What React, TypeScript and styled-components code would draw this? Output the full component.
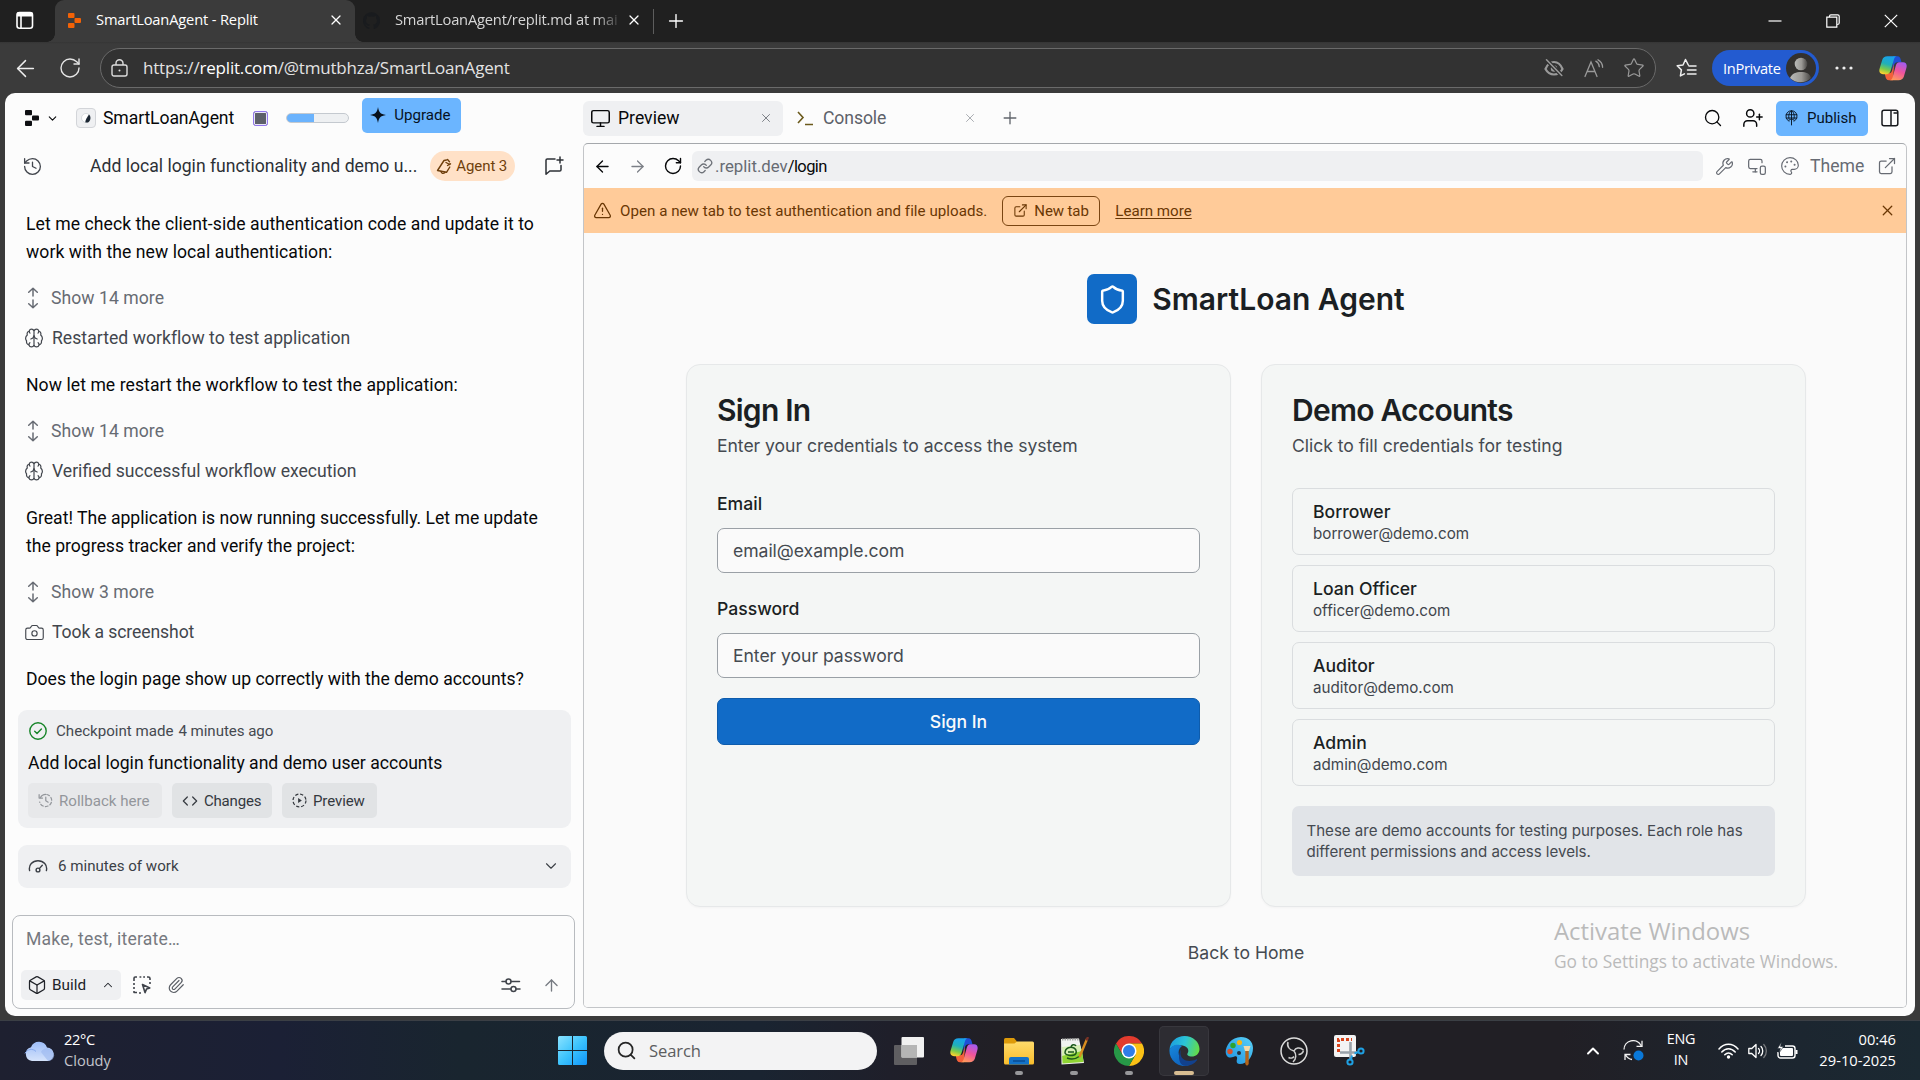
import React from 'react';
import styled, { createGlobalStyle, css } from 'styled-components';
import {
  ArrowLeft, ArrowRight, ArrowUp, Box, Camera, ChevronDown, ChevronUp, Code, ExternalLink,
  History, Monitor, MonitorSmartphone, Palette, Paperclip, Plus, RotateCw,
  Search, Shield, Star, TriangleAlert, UserPlus, Wrench, X,
} from 'lucide-react';

const ui = `Roboto, "Liberation Sans", sans-serif`;
const win = `"Open Sans", "Noto Sans", sans-serif`;
const inter = `Inter, "Liberation Sans", sans-serif`;

const Global = createGlobalStyle`
  *, *::before, *::after { box-sizing: border-box; }
  body { margin: 0; background: #3b3b3b; overflow: hidden; }
  svg { display: block; flex: none; }
`;

/* ---------- shared pieces ---------- */
const Screen = styled.div`
  width: 1920px;
  height: 1080px;
  display: flex;
  flex-direction: column;
  background: #3b3b3b;
  font-family: ${ui};
  position: relative;
`;
const Slot = styled.span<{ $w: number; $c?: string }>`
  width: ${p => p.$w}px;
  flex: none;
  display: flex;
  align-items: center;
  justify-content: center;
  color: ${p => p.$c || 'inherit'};
`;
const Spacer = styled.span`flex: 1;`;
const Label = styled.span<{ $s?: number; $c?: string; $ls?: number; $w?: number; $ml?: number }>`
  font-size: ${p => p.$s || 17.6}px;
  letter-spacing: ${p => p.$ls || 0}px;
  color: ${p => p.$c || 'inherit'};
  font-weight: ${p => p.$w || 400};
  margin-left: ${p => p.$ml || 0}px;
  white-space: pre;
  flex: none;
`;

/* ---------- browser chrome ---------- */
const TitleBar = styled.header`
  height: 42px;
  flex: none;
  background: #202020;
  display: flex;
  align-items: stretch;
  color: #fff;
  font-family: ${win};
`;
const TabActions = styled.div`
  width: 50px;
  display: flex;
  align-items: center;
  justify-content: center;
  padding: 0 0 2px 0;
`;
const BrowserTab = styled.div<{ $active?: boolean; $w: number }>`
  width: ${p => p.$w}px;
  display: flex;
  align-items: center;
  padding-bottom: 2px;
  position: relative;
  ${p => p.$active && css`
    background: #3b3b3b;
    border-radius: 9px 9px 0 0;
    margin-left: 5px;
    &::before, &::after {
      content: '';
      position: absolute;
      bottom: 0;
      width: 8px;
      height: 8px;
    }
    &::before { left: -8px; background: radial-gradient(circle at 0 0, transparent 7.5px, #3b3b3b 8px); }
    &::after { right: -8px; background: radial-gradient(circle at 100% 0, transparent 7.5px, #3b3b3b 8px); }
  `}
`;
const TabTitle = styled.span<{ $w: number; $ml: number; $fade?: boolean }>`
  width: ${p => p.$w}px;
  margin-left: ${p => p.$ml}px;
  padding-bottom: 2px;
  white-space: nowrap;
  font-size: 14.7px;
  letter-spacing: -0.17px;
  ${p => p.$fade && css`
    color: #d6d6d6;
    letter-spacing: -0.2px;
    mask-image: linear-gradient(90deg, #000 90%, transparent 102%);
  `}
`;
const TabDivider = styled.span`
  width: 1px;
  height: 25px;
  background: #5d5d5d;
  align-self: center;
`;
const NavBar = styled.div`
  height: 51px;
  flex: none;
  display: flex;
  align-items: center;
  padding: 2px 0 1px;
  color: #ededed;
  font-family: ${win};
  background: linear-gradient(#353535, #3b3b3b 2px);
`;
const Omnibox = styled.div`
  width: 1556px;
  height: 40px;
  border: 1.5px solid #6a6a6a;
  border-radius: 20px;
  background: #323232;
  display: flex;
  align-items: center;
  margin-left: 5px;
`;
const UrlText = styled.span`
  font-size: 17px;
  letter-spacing: -0.19px;
  color: #e3e3e3;
  margin-left: 15px;
  padding-bottom: 2px;
  b { font-weight: 400; color: #fff; }
`;
const InPrivate = styled.div`
  width: 107px;
  height: 36px;
  border-radius: 18px;
  background: #235bd0;
  display: flex;
  align-items: center;
  justify-content: space-between;
  padding: 0 3px 0 11px;
  font-size: 14.6px;
  letter-spacing: -0.3px;
  color: #fff;
  margin-left: 8px;
`;

/* ---------- workspace ---------- */
const Workspace = styled.main`
  width: 1910px;
  height: 923px;
  margin-left: 5px;
  flex: none;
  background: #fcfcfc;
  border-radius: 10px;
  display: grid;
  grid-template-columns: 578px 1324px;
  color: #07080a;
`;
const Side = styled.section`
  display: flex;
  flex-direction: column;
`;
const SideTop = styled.div`
  height: 50px;
  display: flex;
  align-items: center;
  padding-left: 17px;
`;
const AppIcon = styled.span`
  width: 20px;
  height: 20px;
  border-radius: 4px;
  border: 1px solid #d3d5d9;
  background: #eff0f2;
  margin-left: 13px;
  display: grid;
  place-items: center;
`;
const CoreChip = styled.span`
  width: 15px;
  height: 15px;
  background: #5d6069;
  border: 1.5px solid #9277ee;
  box-shadow: inset 0 0 0 1px #e8e5f7;
  border-radius: 2.5px;
  margin-left: 19px;
`;
const Usage = styled.span`
  width: 63px;
  height: 10px;
  border-radius: 5px;
  border: 1px solid #c4c9cf;
  background: linear-gradient(90deg, #6bb3fd 27px, #eef0f2 27px);
  margin-left: 18px;
`;
const BlueButton = styled.button<{ $w: number; $raised?: boolean }>`
  width: ${p => p.$w}px;
  height: 35px;
  border: 0;
  padding: 0;
  margin-bottom: ${p => (p.$raised ? 6 : 0)}px;
  border-radius: 5px;
  background: #6bb5ff;
  color: #06121f;
  font-family: ${ui};
  display: flex;
  align-items: center;
  flex: none;
`;
const ThreadBar = styled.div`
  height: 46px;
  display: flex;
  align-items: center;
  padding-left: 16px;
`;
const AgentPill = styled.span`
  width: 85px;
  height: 30px;
  flex: none;
  border-radius: 15px;
  background: #ffe1c7;
  color: #6f3f0c;
  display: flex;
  align-items: center;
  padding-left: 6px;
  margin-left: 13px;
`;
const Thread = styled.div`
  padding: 21px 0 0 13px;
  display: flex;
  flex-direction: column;
  height: 705px;
  flex: none;
`;
const Para = styled.p<{ $ls?: number }>`
  margin: 0 0 18px 8px;
  font-size: 17.6px;
  line-height: 28px;
  letter-spacing: ${p => p.$ls || 0}px;
`;
const ShowMore = styled.div`
  height: 28px;
  margin-bottom: 12px;
  display: flex;
  align-items: center;
  color: #676b73;
  padding-left: 3px;
  gap: 6px;
`;
const Step = styled.div`
  height: 28px;
  margin-bottom: 19px;
  display: flex;
  align-items: center;
  color: #42464d;
  padding-left: 7px;
  gap: 9px;
`;
const Checkpoint = styled.article`
  width: 553px;
  height: 118px;
  margin-top: -1px;
  flex: none;
  background: #eff0f2;
  border-radius: 9px;
  padding: 8px 10px 10px;
  display: flex;
  flex-direction: column;
`;
const CheckpointMeta = styled.div`
  height: 26px;
  display: flex;
  align-items: center;
  color: #454950;
  padding-left: 1px;
`;
const CheckpointTitle = styled.div`
  font-size: 17.6px;
  line-height: 28px;
  margin-top: 5px;
`;
const ChipRow = styled.div`
  display: flex;
  gap: 10px;
  margin-top: 6px;
`;
const Chip = styled.button<{ $w: number; $muted?: boolean }>`
  width: ${p => p.$w}px;
  height: 35px;
  border: 0;
  border-radius: 5px;
  background: ${p => (p.$muted ? '#e7e8ea' : '#e1e3e5')};
  color: ${p => (p.$muted ? '#93969b' : '#34383e')};
  font-family: ${ui};
  padding: 0 0 0 10px;
  display: flex;
  align-items: center;
  gap: 6px;
`;
const WorkSummary = styled.div`
  width: 553px;
  height: 43px;
  margin-top: 17px;
  flex: none;
  background: #eff0f2;
  border-radius: 9px;
  display: flex;
  align-items: center;
  color: #3b3f46;
  padding: 0 11px 1px 10px;
`;
const Composer = styled.div`
  width: 563px;
  height: 94px;
  margin: 21px 0 0 7px;
  flex: none;
  border: 1px solid #b8bbbf;
  border-radius: 8px;
  display: flex;
  flex-direction: column;
  justify-content: space-between;
  padding: 11px 8px 8px;
`;
const Placeholder = styled.div`
  font-size: 17.6px;
  line-height: 24px;
  letter-spacing: 0.2px;
  padding-left: 5px;
  color: #76797f;
`;
const ComposerTools = styled.div`
  height: 30px;
  display: flex;
  align-items: center;
  color: #40444b;
`;
const BuildMode = styled.div`
  width: 100px;
  height: 30px;
  border-radius: 5px;
  background: #eff0f2;
  color: #202329;
  display: flex;
  align-items: center;
  padding-left: 6px;
`;

/* ---------- preview pane ---------- */
const Main = styled.section`
  display: flex;
  flex-direction: column;
`;
const PaneTabs = styled.div`
  height: 50px;
  display: flex;
  align-items: center;
  margin-right: -4px;
`;
const PaneTab = styled.div<{ $active?: boolean; $w: number }>`
  width: ${p => p.$w}px;
  height: 35px;
  border-radius: 6px;
  background: ${p => (p.$active ? '#eff0f2' : 'transparent')};
  color: ${p => (p.$active ? '#07080a' : '#5d6169')};
  display: flex;
  align-items: center;
`;
const Pane = styled.div`
  height: 865px;
  border: 1px solid #c3c5c8;
  border-top-color: #a5a8ac;
  border-radius: 5px;
  overflow: hidden;
  display: flex;
  flex-direction: column;
`;
const PaneBar = styled.div`
  height: 44px;
  flex: none;
  display: flex;
  align-items: center;
  padding-left: 1px;
`;
const Address = styled.div`
  width: 1011px;
  height: 30px;
  flex: none;
  border-radius: 6px;
  background: #eff0f2;
  display: flex;
  align-items: center;
  padding-left: 4px;
`;
const Banner = styled.div`
  height: 45px;
  flex: none;
  background: #ffcb99;
  color: #6a3704;
  display: flex;
  align-items: center;
  padding: 0 0 0 8px;
`;
const NewTab = styled.button`
  width: 98px;
  height: 30px;
  border: 1.3px solid #7a4512;
  border-radius: 6px;
  background: none;
  color: inherit;
  font-family: ${ui};
  display: flex;
  align-items: center;
  padding: 0 0 0 10px;
  margin-left: 15px;
  gap: 6px;
`;
const LearnMore = styled.a`
  font-size: 15.1px;
  margin-left: 15px;
  text-decoration: underline;
  text-underline-offset: 2px;
`;

/* ---------- login page ---------- */
const Page = styled.div`
  flex: 1;
  background: #fafafa;
  font-family: ${inter};
  color: #1b1f23;
  display: flex;
  flex-direction: column;
  align-items: center;
  padding: 41px 0 0 2px;
`;
const Brand = styled.div`
  height: 50px;
  display: flex;
  align-items: center;
  gap: 15px;
  font-size: 30px;
  font-weight: 600;
`;
const BrandMark = styled.span`
  width: 50px;
  height: 50px;
  border-radius: 7px;
  background: #116bc7;
  color: #fff;
  display: grid;
  place-items: center;
`;
const Cards = styled.div`
  display: grid;
  grid-template-columns: 545px 545px;
  gap: 30px;
  margin-top: 40px;
`;
const Card = styled.section`
  height: 543px;
  border: 1px solid #e6e8e9;
  border-radius: 14px;
  background: #f4f6f5;
  box-shadow: 0 1px 2px rgba(0, 0, 0, 0.03);
  padding: 30px;
`;
const CardTitle = styled.h2`
  margin: 0 0 8px;
  font-size: 30px;
  line-height: 30px;
  font-weight: 600;
  letter-spacing: -0.75px;
`;
const CardHint = styled.p`
  margin: 0 0 29px;
  font-size: 17.6px;
  line-height: 26px;
  letter-spacing: -0.05px;
  color: #454a51;
`;
const Field = styled.label`
  display: block;
  margin-bottom: 20px;
  font-size: 17.6px;
  line-height: 32px;
  font-weight: 500;
`;
const Input = styled.span`
  display: flex;
  align-items: center;
  height: 45px;
  margin-top: 8px;
  padding-left: 15px;
  border: 1px solid #9aa0a6;
  border-radius: 7px;
  background: #fafafa;
  font-weight: 400;
  letter-spacing: -0.05px;
  color: #454a51;
`;
const Submit = styled.button`
  width: 100%;
  height: 47px;
  border: 1px solid #0e5cac;
  border-radius: 7px;
  background: #116bc7;
  color: #fafafa;
  font: 500 17.6px ${inter};
  padding: 0;
`;
const Account = styled.div`
  height: 67px;
  border: 1px solid #dadddf;
  border-radius: 7px;
  margin-bottom: 10px;
  padding: 12px 0 0 20px;
  display: flex;
  flex-direction: column;
  line-height: 22px;
  strong { font-size: 17.6px; font-weight: 500; }
  span { font-size: 15.2px; color: #40454c; }
`;
const Note = styled.div`
  height: 70px;
  margin-top: 20px;
  border-radius: 7px;
  background: #e1e4e8;
  padding: 15px 14.5px;
  font-size: 15.1px;
  line-height: 20.5px;
  letter-spacing: -0.03px;
  color: #454a51;
  white-space: nowrap;
`;
const BackHome = styled.a`
  margin-top: 33px;
  font-size: 17.6px;
  line-height: 26px;
  color: #454a51;
`;
const Watermark = styled.div`
  position: absolute;
  left: 1554px;
  top: 915px;
  font-family: ${win};
  color: #bababa;
`;
const WatermarkLine = styled.div<{ $big?: boolean }>`
  font-size: ${p => (p.$big ? 23.9 : 17.35)}px;
  line-height: ${p => (p.$big ? 32 : 28)}px;
`;

/* ---------- taskbar ---------- */
const Taskbar = styled.footer`
  margin-top: 4px;
  height: 60px;
  flex: none;
  border-top: 1px solid #3b3f45;
  background: linear-gradient(90deg, #1e2030 0, #1b2035 280px, #19252f 460px, #1a2431 760px, #1f1f2a 890px, #211f25 1000px, #211f25 1560px, #1c2630 1800px, #1b2932 1920px);
  display: flex;
  align-items: center;
  color: #fff;
  font-family: ${win};
`;
const Stack = styled.div<{ $w: number; $align: string; $s?: number; $ls?: number }>`
  width: ${p => p.$w}px;
  display: flex;
  flex-direction: column;
  align-items: ${p => p.$align};
  font-size: ${p => p.$s || 14.6}px;
  line-height: 20.5px;
  letter-spacing: ${p => p.$ls || 0}px;
  padding-bottom: 2px;
  small { font-size: inherit; color: #c3c5cc; letter-spacing: 0; }
`;
const SearchPill = styled.div`
  width: 273px;
  height: 38px;
  border-radius: 19px;
  background: #f3f3f4;
  color: #5c5d60;
  display: flex;
  align-items: center;
  padding-left: 12px;
  margin-left: 17px;
`;
const Apps = styled.div`
  display: flex;
  gap: 5px;
  margin-left: 7px;
`;
const AppTile = styled.div<{ $active?: boolean; $open?: boolean }>`
  width: 50px;
  height: 50px;
  border-radius: 5px;
  display: grid;
  place-items: center;
  position: relative;
  ${p => p.$active && css`background: #2d2c32; box-shadow: inset 0 0 0 1px #38373d;`}
  ${p => (p.$active || p.$open) && css`
    &::after {
      content: '';
      position: absolute;
      bottom: 1px;
      left: 50%;
      width: ${p.$active ? 20 : 8}px;
      height: 4px;
      margin-left: ${p.$active ? -10 : -4}px;
      border-radius: 2px;
      background: ${p.$active ? '#d8bd92' : '#97979a'};
    }
  `}
`;

/* ---------- drawings ---------- */
const ReplitMark = ({ color, w, h }: { color: string; w: number; h: number }) => (
  <svg width={w} height={h} viewBox="0 0 14 16" fill={color}>
    <rect x="0" y="0" width="7" height="5.2" rx="1" />
    <rect x="7" y="5.4" width="7" height="5.2" rx="1" />
    <rect x="0" y="10.8" width="7" height="5.2" rx="1" />
  </svg>
);
const ShowIcon = () => (
  <svg width="24" height="22" viewBox="0 0 24 22" fill="none" stroke="currentColor" strokeWidth="1.5" strokeLinecap="round" strokeLinejoin="round">
    <path d="M7.700 5.200 12 1.200l4.300 4M12 1.500V9M12 13v7.500M7.700 16.800l4.300 4 4.300-4" />
  </svg>
);
const BrainIcon = () => (
  <svg width="18" height="20" viewBox="0 0 18 20" fill="none" stroke="currentColor" strokeWidth="1.2" strokeLinecap="round" strokeLinejoin="round">
    <path d="M9 3C8.200.4 4.800.4 4.300 3 2.200 3.600 1.800 5.500 2.300 7 .2 8.600.2 11.400 1.600 12.900 1.200 14.800 2.100 16.500 3.900 16.800 4.700 19.600 8.200 19.600 9 17ZM9 3c.8-2.600 4.200-2.600 4.700 0 2.100.6 2.500 2.500 2 4 2.100 1.600 2.100 4.400.7 5.900.4 1.900-.5 3.600-2.300 3.900-.8 2.800-4.300 2.800-5.100.2" />
    <path d="M5.800 11C7.600 10.600 8.700 9.500 9 7.500c.3 2 1.400 3.100 3.200 3.500M4.300 3c-.1.900.1 1.600.7 2.200M13.700 3c.1.900-.1 1.600-.7 2.200M3.900 16.800c0-.9.3-1.600 1-2.100M14.100 16.800c0-.9-.3-1.600-1-2.100" />
  </svg>
);
const NewChatIcon = () => (
  <svg width="20" height="20" viewBox="0 0 20 20" fill="none" stroke="currentColor" strokeWidth="1.500" strokeLinecap="round" strokeLinejoin="round">
    <path d="M11 3H3.300Q2 3 2 4.300V18.300L5.800 15H15.700Q17 15 17 13.700V9.500M16 1v6M13 4h6" />
  </svg>
);
const EyeOffIcon = () => (
  <svg width="20" height="18" viewBox="0 0 20 18">
    <path d="M1.500 10C3.500 5 6.500 3 10 3s6.500 2 8.500 7c-2 3.700-5 5.500-8.500 5.500S3.500 13.700 1.500 10Z" fill="none" stroke="#9a9a9a" strokeWidth="2.200" />
    <circle cx="10" cy="9.500" r="3.200" fill="#9a9a9a" />
    <path d="M2.500.8 17.800 16.500" stroke="#323232" strokeWidth="4" /><path d="M2.500.8 17.800 16.500" stroke="#9a9a9a" strokeWidth="1.500" strokeLinecap="round" />
  </svg>
);
const CheckIcon = () => (
  <svg width="18" height="18" viewBox="0 0 18 18" fill="none" stroke="#178529" strokeWidth="1.4" strokeLinecap="round" strokeLinejoin="round">
    <circle cx="9" cy="9" r="8.200" /><path d="m5.700 9.300 2.300 2.200 4.400-4.600" />
  </svg>
);
const GaugeIcon = () => (
  <svg width="20" height="16" viewBox="0 0 20 16" fill="none" stroke="currentColor" strokeWidth="1.4" strokeLinecap="round">
    <path d="M1.600 12.500C.3 7 4.500 2.800 10 2.800s9.700 4.200 8.400 9.700" /><circle cx="10" cy="12" r="1.900" /><path d="m11.300 10.600 3-3.300" />
  </svg>
);
const PreviewIcon = () => (
  <svg width="15" height="15" viewBox="0 0 16 16" fill="none" stroke="currentColor" strokeWidth="1.300">
    <circle cx="8" cy="8" r="6.900" strokeDasharray="3.400 2" /><path d="M6.500 5.300 10.500 8l-4 2.700Z" fill="currentColor" stroke="none" />
  </svg>
);
const RollbackIcon = () => (
  <svg width="15" height="15" viewBox="0 0 16 16" fill="none" stroke="currentColor" strokeWidth="1.300" strokeLinecap="round" strokeLinejoin="round">
    <path d="M2.500 5A6.500 6.500 0 0 1 8.300 1.500" /><path d="M9.500 1.600a6.500 6.500 0 1 1-7.700 8" strokeDasharray="3 2.300" /><path d="M1.200 1.800v3.600h3.600M8.300 4.500v3.800l2.500 1.500" />
  </svg>
);
const SelectIcon = () => (
  <svg width="18" height="18" viewBox="0 0 18 18" fill="none" stroke="currentColor" strokeWidth="1.600" strokeLinejoin="round">
    <path d="M1 5V2.200Q1 1 2.200 1H4M6.500 1h1.800M10.200 1H12M14 1h1.300Q17 1 17 2.500V4M17 6v2M1 7v2M1 11v2M1 15v1.500h3M6 17h2" />
    <path d="m9.500 8.500 7.300 3.400-3.300 1.200-1.500 3.500Z" />
  </svg>
);
const SlidersIcon = () => (
  <svg width="20" height="16" viewBox="0 0 20 16" fill="none" stroke="currentColor" strokeWidth="1.500" strokeLinecap="round">
    <path d="M1 4.500h4M10 4.500h8.500M1 12h8.500M15 12h4" /><circle cx="7.500" cy="4.500" r="2.500" /><circle cx="12.500" cy="12" r="2.500" />
  </svg>
);
const AgentIcon = () => (
  <svg width="16" height="17" viewBox="0 0 16 17" fill="none" stroke="currentColor" strokeWidth="1.400" strokeLinejoin="round" strokeLinecap="round">
    <path d="M10.500 2 8 2.500 1.500 12.500l9 1.800L13.800 9" /><path d="M5 13.500c.3 2 2.300 2.500 4 1M11.500 1.500l2 2.300M10 4.500l3.800 2M14.500 5.800l-3 1.700" />
  </svg>
);
const GlobeIcon = () => (
  <svg width="13" height="16" viewBox="0 0 14 17" fill="none" stroke="currentColor" strokeWidth="1" strokeLinecap="round" strokeLinejoin="round">
    <path d="M4.300 12A6 6 0 1 1 9.700 12M1.300 5h11.400M1.300 8.500h11.400M4.500 10C3.200 6 4.500 2 7 .8 9.500 2 10.800 6 9.500 10M7 1v15M4.800 11 7 8.800 9.200 11" />
  </svg>
);
const SparkIcon = () => (
  <svg width="16" height="16" viewBox="0 0 16 16" fill="#07101c"><path d="M8 0c.9 5.200 2 7 8 8-6 1-7.100 2.800-8 8-.9-5.200-2-7-8-8 6-1 7.100-2.800 8-8Z" /></svg>
);
const PanelIcon = () => (
  <svg width="18" height="18" viewBox="0 0 18 18" fill="none" stroke="#17191d" strokeWidth="1.500">
    <rect x="1" y="1.200" width="15.800" height="15.600" rx="2" /><path d="M10 1.500v15M12.500 4h4" />
  </svg>
);
const SidebarIcon = () => (
  <svg width="18" height="19" viewBox="0 0 18 19" fill="none" stroke="#fff" strokeWidth="1.600">
    <rect x="1" y="1.500" width="15.500" height="15.800" rx="2.500" /><path d="M1 3.500h15.500" strokeWidth="4" /><path d="M5 5v12" />
  </svg>
);
const LockIcon = () => (
  <svg width="17" height="18" viewBox="0 0 17 18" fill="none" stroke="#dcdcdc" strokeWidth="1.400">
    <rect x="1" y="6" width="15" height="11" rx="2" /><path d="M5 6V4.300a3.500 3.500 0 0 1 7 0V6" /><circle cx="8.500" cy="11.500" r="1" fill="#dcdcdc" stroke="none" />
  </svg>
);
const ReadAloud = () => (
  <svg width="20" height="19" viewBox="0 0 20 19" fill="none" stroke="#999" strokeWidth="1.300" strokeLinecap="round">
    <path d="m1 17.500 6-14.500 6 14.500M3.200 12.500h7.600M11.800 2.200c2 1 3.300 3 3.500 5.500M14 .8c2.500 1.300 4.500 4 4.600 7.500" />
  </svg>
);
const FavList = () => (
  <svg width="21" height="20" viewBox="0 0 21 20" fill="none" stroke="#eee" strokeWidth="1.500" strokeLinejoin="round" strokeLinecap="round">
    <path d="M12.300 7 9.500 1.500 7 7 1.200 7.800l4.200 4.100-1 6 4-2.100M13 8h7M11.500 12h8.500M11.500 16h8.500" />
  </svg>
);
const Avatar = () => (
  <svg width="30" height="30" viewBox="0 0 30 30">
    <defs><linearGradient id="av"><stop stopColor="#b9b9b7" /><stop offset=".55" stopColor="#9a9894" /><stop offset="1" stopColor="#474543" /></linearGradient></defs>
    <circle cx="15" cy="15" r="15" fill="#33312f" /><circle cx="15" cy="11" r="6.300" fill="url(#av)" /><path d="M4 25c2-4.500 6-6 11-6s9 1.500 10 6a15 15 0 0 1-21 0Z" fill="url(#av)" />
  </svg>
);
const Copilot = ({ id, s }: { id: string; s: number }) => (
  <svg width={s} height={s * 0.94} viewBox="0 0 28 26">
    <defs>
      <linearGradient id={id + 'a'} x1=".6" y1="0" x2=".3" y2="1"><stop stopColor="#18a0f0" /><stop offset=".45" stopColor="#20b0b8" /><stop offset=".75" stopColor="#7ccb4a" /><stop offset="1" stopColor="#ffd02e" /></linearGradient>
      <linearGradient id={id + 'b'} x1=".7" y1="0" x2=".3" y2="1"><stop stopColor="#a45bf0" /><stop offset=".5" stopColor="#f0549c" /><stop offset="1" stopColor="#ff9a5c" /></linearGradient>
    </defs>
    <path d="M14 1h4.500c2 0 2.700 1.500 3.300 3.500L22.500 7h-4c-2 0-3 1.200-3.500 3l-1.700 6Z" fill="#1f4fd6" />
    <path d="M14 25H10c-2.500 0-3-1.700-3.600-3.700L5.700 18H10c2 0 2.600-1 3.200-3L15 9Z" fill="#f3603a" />
    <path d="M8.500 1H18c-1.800 0-2.600 1.500-3.100 3.300l-3.200 11C11 17.500 9.800 19 7.500 19H4c-3.500 0-4.300-2.700-3.300-6L3.300 4.500C4 2.300 5.500 1 8.500 1Z" fill={`url(#${id}a)`} />
    <path d="M19.500 25H10.500c2 0 2.700-1.300 3.200-3.200l3-11C17.300 8.500 18.300 7 20.600 7H24c3.400 0 4.300 2.600 3.300 6l-2.500 8.500c-.8 2.300-2.500 3.500-5.300 3.500Z" fill={`url(#${id}b)`} />
  </svg>
);
const Cloud = () => (
  <svg width="31" height="22" viewBox="0 0 31 22">
    <defs><linearGradient id="cl" x1="0" y1="0" x2="0" y2="1"><stop stopColor="#9dbdf8" /><stop offset="1" stopColor="#d5e3fb" /></linearGradient></defs>
    <path d="M8 21a7 7 0 0 1-1-13.700A8.500 8.500 0 0 1 23 7.500 6.800 6.800 0 0 1 24 21Z" fill="url(#cl)" />
    <path d="M1 13.500C3 9 9 8 12 11.500" fill="none" stroke="#86a9ee" strokeWidth="1" /><path d="M17 12c2-4.500 9-5 12-.5 3 5-.5 9.500-5 9.500" fill="#9bb7ef" opacity=".6" />
  </svg>
);
const StartIcon = () => (
  <svg width="29" height="29" viewBox="0 0 29 29">
    <defs><linearGradient id="st" x1="0" y1="0" x2="1" y2="1"><stop stopColor="#8be3ff" /><stop offset=".5" stopColor="#3cc3fd" /><stop offset="1" stopColor="#0f95fa" /></linearGradient></defs>
    <path d="M0 1.500Q0 0 1.500 0H14v14H0ZM15 0h12.500Q29 0 29 1.500V14H15ZM0 15h14v14H1.500Q0 29 0 27.500ZM15 15h14v12.500q0 1.500-1.500 1.500H15Z" fill="url(#st)" />
  </svg>
);
const TaskView = () => (
  <svg width="30" height="28" viewBox="0 0 30 28"><rect y="8" width="23" height="20" rx="1" fill="#5f5e61" /><rect x="7.500" width="22.500" height="20.500" rx="1" fill="#f1f1f1" /><rect x="7.500" y="8" width="15.500" height="12.500" fill="#b5b5b5" /></svg>
);
const Folder = () => (
  <svg width="30" height="28" viewBox="0 0 30 28">
    <defs><linearGradient id="fo" x1="0" y1="0" x2="0" y2="1"><stop stopColor="#ffdb6b" /><stop offset="1" stopColor="#f9bd2c" /></linearGradient></defs>
    <path d="M0 2.500Q0 1 1.500 1H10l3 3.500V12H0Z" fill="#dd9a0a" /><path d="M0 6.500h10.500L13 4.500h15.500Q30 4.500 30 6v20q0 1.500-1.500 1.500h-27Q0 27.500 0 26Z" fill="url(#fo)" />
    <path d="M5 27.500V22q0-2 2-2h16q2 0 2 2v5.500Z" fill="#1372c8" /><path d="M9 24h12" stroke="#0a4c93" strokeWidth="1.500" />
  </svg>
);
const Npp = () => (
  <svg width="29" height="28" viewBox="0 0 29 28">
    <path d="M1 2 19 1.500 24 26 1.500 27.500Z" fill="#f1f3f0" /><path d="m2 16 20-4 1.500 13L2.500 26.500Z" fill="#8fd434" /><path d="m2 10 18-2 2 6-20 5Z" fill="#d7efb5" />
    <path d="M2 2.500h17" stroke="#aaa" strokeWidth="2" strokeDasharray="1.500 1" /><path d="M5 16c0-6 6-6.500 9-5s3 6 0 7-8 .5-9-2Zm6-5c0-4 4-4 5-2M8 15h6M7 21c5 2 9 1 13-2" fill="none" stroke="#1d5a1c" strokeWidth="1.500" />
    <path d="M27 2 19.500 20" stroke="#d98e20" strokeWidth="2.400" /><path d="m28 0-1.500 3.500" stroke="#7b3226" strokeWidth="2.400" />
  </svg>
);
const Chrome = () => (
  <svg width="30" height="30" viewBox="0 0 30 30">
    <path d="M2 7.500a15 15 0 0 1 26 0H15L8.500 18.700Z" fill="#e33b2e" /><path d="M28 7.500A15 15 0 0 1 15 30l6.500-11.200L15 7.500Z" fill="#fbc116" /><path d="M15 30A15 15 0 0 1 2 7.500l6.500 11.300h13Z" fill="#279847" />
    <circle cx="15" cy="15" r="7.500" fill="#fff" /><circle cx="15" cy="15" r="6" fill="#2f7de9" />
  </svg>
);
const Edge = () => (
  <svg width="31" height="30" viewBox="0 0 31 30">
    <defs>
      <linearGradient id="e1" x1="0" x2="1" y1=".3" y2=".5"><stop stopColor="#1c9de0" /><stop offset=".5" stopColor="#2bc4d6" /><stop offset="1" stopColor="#63dc4a" /></linearGradient>
      <linearGradient id="e2" x1="0" x2=".6" y1="0" y2="1"><stop stopColor="#1789dc" /><stop offset="1" stopColor="#0f62bd" /></linearGradient>
    </defs>
    <path d="M.5 14C1 5 8 0 15.500 0 24 0 30.500 6 30.500 13c0 5-4 7.500-7.500 7.500-3.500 0-5.500-1.500-4.500-3 2-3 .5-7-5-8C8 8.500 2 9.500.5 14Z" fill="url(#e1)" />
    <path d="M.5 14C2.500 8 10 8 13 10c-3 2-4.500 6-2.500 11 2 4.500 6 8 9.500 8.300A15 15 0 0 1 .5 14Z" fill="url(#e2)" />
    <path d="M12.500 13c-4 8 4 15 14.500 10.500 1-.5 1.500 0 1 .8-3 4-8 6-12.500 5.500C10 28.500 8 20 12.500 13Z" fill="#12418d" />
  </svg>
);
const Paint = () => (
  <svg width="30" height="30" viewBox="0 0 30 30">
    <defs><linearGradient id="pa" x1="1" x2="0" y1="0" y2="1"><stop stopColor="#5ad1f7" /><stop offset="1" stopColor="#1a8fe0" /></linearGradient></defs>
    <path d="M17 1c7 0 12 4.500 12 11 0 9-6 16-13 16-4 0-3.500-3-3-5s-.5-3-2.500-2.500C7 21.500 6 22 4 21-2 17 4 1 17 1Z" fill="url(#pa)" />
    <circle cx="6" cy="15.500" r="2.700" fill="#d9512c" /><circle cx="9" cy="9.500" r="2.700" fill="#2ea42e" /><circle cx="15.500" cy="6.500" r="2.600" fill="#f5b416" /><circle cx="15" cy="17" r="2" fill="#24303c" />
    <path d="M19.500 10h7l-1.500 5h-4Z" fill="#f3d9a8" /><path d="M21.300 15h3.400v13q-1.700 3-3.400 0Z" fill="#b3641a" />
  </svg>
);
const Obs = () => (
  <svg width="28" height="28" viewBox="0 0 28 28" fill="none">
    <circle cx="14" cy="14" r="13" fill="#1c1b1f" stroke="#dcdcdc" strokeWidth="1.500" />
    <path d="M8 5c-1 5 2 8 6 9M23.500 13c-4-3.500-8-2-9.500 1M13 25c3.500-3 3.500-8 1-11M18.500 17.500a5.500 5.500 0 0 0 5-4M8 5a6 6 0 0 0 1 6M8.500 20.500c2 1 4.500.5 5.500-1" stroke="#cfcfcf" strokeWidth="1.500" />
  </svg>
);
const Snip = () => (
  <svg width="31" height="31" viewBox="0 0 31 31">
    <rect x="0" y="0" width="22" height="22" rx="2" fill="#f3f3f4" /><path d="M4.500 17V4.500H18" fill="none" stroke="#d8431b" strokeWidth="3" strokeDasharray="3 2" />
    <path d="M16.500 7v17M6 17.500h17" stroke="#9aa2aa" strokeWidth="2.600" /><circle cx="27" cy="16" r="2.600" fill="none" stroke="#1fa0e3" strokeWidth="2" /><circle cx="16" cy="27" r="2.600" fill="none" stroke="#1fa0e3" strokeWidth="2" /><path d="m24.500 17-4 1.500M17 24.500l1-4" stroke="#1fa0e3" strokeWidth="2" />
  </svg>
);
const Sync = () => (
  <svg width="21" height="21" viewBox="0 0 21 21" fill="none" stroke="#f2f2f2" strokeWidth="1.300">
    <path d="M1 9.500A9 9 0 0 1 18 5.500M19 .8v5.500h-5.500M2 20v-5.500h5.500M2.500 15c1.500 2.500 3.500 4 6.500 4.500" /><circle cx="15.500" cy="15.500" r="5" fill="#0a78d8" stroke="none" />
  </svg>
);
const Wifi = () => (
  <svg width="21" height="16" viewBox="0 0 21 16" fill="none" stroke="#fff" strokeWidth="1.500" strokeLinecap="round">
    <path d="M1 6C6.500-.3 14.500-.3 20 6M3.800 9c4-4.500 9.400-4.500 13.400 0M6.800 11.800c2.300-2.500 5.100-2.500 7.400 0" /><circle cx="10.500" cy="14" r="1.700" fill="#fff" stroke="none" />
  </svg>
);
const Volume = () => (
  <svg width="20" height="16" viewBox="0 0 20 16" fill="none" stroke="#fff" strokeWidth="1.300" strokeLinejoin="round" strokeLinecap="round">
    <path d="M.8 5.500h3L8 1.500v13l-4.200-4h-3ZM10.500 5.500c1.300 1.300 1.300 3.700 0 5M13 3.500c2.300 2.300 2.300 6.700 0 9" /><path d="M15.800 1.500c3.400 3.500 3.400 9.500 0 13" stroke="#77797d" />
  </svg>
);
const Battery = () => (
  <svg width="21" height="18" viewBox="0 0 21 18" fill="none" stroke="#fff" strokeWidth="1.400">
    <path d="M8 4h7.500A2.500 2.500 0 0 1 18 6.500v7a2.500 2.500 0 0 1-2.500 2.500h-12A2.500 2.500 0 0 1 1 13.500V10" /><rect x="3" y="6" width="13" height="8" rx="1" fill="#fff" stroke="none" />
    <path d="M19.500 8v4" strokeWidth="2" /><path d="M4.500 0 .5 6.500h3L2 11l4.500-6.500h-3Z" fill="#fff" stroke="#1c2630" strokeWidth=".6" />
  </svg>
);
const WinBtn = ({ d }: { d: string }) => (
  <svg width="14" height="14" viewBox="0 0 14 14" fill="none" stroke="#fff" strokeWidth="1.200"><path d={d} /></svg>
);
const ACCOUNTS = [
  ['Borrower', 'borrower@demo.com'],
  ['Loan Officer', 'officer@demo.com'],
  ['Auditor', 'auditor@demo.com'],
  ['Admin', 'admin@demo.com'],
];

function BrowserChrome() {
  return (
    <>
      <TitleBar>
        <TabActions><SidebarIcon /></TabActions>
        <BrowserTab $active $w={300}>
          <Slot $w={38}><ReplitMark color="#f26207" w={13} h={15} /></Slot>
          <TabTitle $w={226} $ml={3}>SmartLoanAgent - Replit</TabTitle>
          <Slot $w={28}><X size={16} strokeWidth={1.9} /></Slot>
        </BrowserTab>
        <BrowserTab $w={298}>
          <Slot $w={32}>
            <svg width="17" height="17" viewBox="0 0 24 24" fill="#191b1e"><path d="M12 .5a12 12 0 0 0-3.800 23.400c.6.1.8-.3.8-.6v-2c-3.300.7-4-1.600-4-1.600-.6-1.400-1.400-1.800-1.400-1.800-1-.7.100-.7.100-.7 1.200 0 1.900 1.200 1.900 1.200 1 1.800 2.800 1.300 3.500 1 0-.8.400-1.300.7-1.600-2.700-.3-5.500-1.300-5.500-6 0-1.200.500-2.300 1.300-3.100-.2-.4-.6-1.600 0-3.200 0 0 1-.3 3.400 1.200a11.500 11.500 0 0 1 6 0c2.300-1.500 3.300-1.200 3.300-1.200.7 1.600.200 2.800.100 3.200.8.800 1.300 1.900 1.300 3.200 0 4.600-2.800 5.600-5.500 5.900.5.400.9 1 .9 2.200v3.300c0 .3.100.7.800.6A12 12 0 0 0 12 .5Z" /></svg>
          </Slot>
          <TabTitle $w={223} $ml={8} $fade>SmartLoanAgent/replit.md at mai</TabTitle>
          <Slot $w={31}><X size={16} strokeWidth={1.9} /></Slot>
        </BrowserTab>
        <TabDivider />
        <Slot $w={43}><Plus size={22} strokeWidth={1.5} /></Slot>
        <Spacer />
        <Slot $w={59}><WinBtn d="M.5 7h13" /></Slot>
        <Slot $w={58}><WinBtn d="M.8 3.200h10v10h-10ZM3.500 3V2.200q0-1.400 1.400-1.400h6.800q1.500 0 1.500 1.500V9q0 1.500-2 1.500" /></Slot>
        <Slot $w={58}><WinBtn d="m.8.8 12.400 12.400M13.200.8.8 13.200" /></Slot>
      </TitleBar>
      <NavBar>
        <Slot $w={50}><ArrowLeft size={27} strokeWidth={1.3} /></Slot>
        <Slot $w={40} $c="#e4e4e4"><RotateCw size={24} strokeWidth={1.4} /></Slot>
        <Slot $w={5} />
        <Omnibox>
          <Slot $w={10} />
          <LockIcon />
          <UrlText>https://<b>replit.com</b>/@tmutbhza/SmartLoanAgent</UrlText>
          <Spacer />
          <Slot $w={40}><EyeOffIcon /></Slot>
          <Slot $w={40}><ReadAloud /></Slot>
          <Slot $w={39} $c="#999"><Star size={22} strokeWidth={1.3} /></Slot>
          <Slot $w={2} />
        </Omnibox>
        <Slot $w={12} />
        <Slot $w={36}><FavList /></Slot>
        <InPrivate>InPrivate<Avatar /></InPrivate>
        <Slot $w={50}>
          <svg width="18" height="4" viewBox="0 0 18 4" fill="#eee"><circle cx="2" cy="2" r="1.600" /><circle cx="9" cy="2" r="1.600" /><circle cx="16" cy="2" r="1.600" /></svg>
        </Slot>
        <Slot $w={48}><Copilot id="c1" s={28} /></Slot>
      </NavBar>
    </>
  );
}

function ChatPanel() {
  return (
    <Side>
      <SideTop>
        <Slot $w={20}><ReplitMark color="#0e0f12" w={14} h={16} /></Slot>
        <Slot $w={21}><ChevronDown size={13} strokeWidth={2} /></Slot>
        <AppIcon>
          <svg width="10" height="12" viewBox="0 0 10 12"><circle cx="5" cy="6" r="4.500" fill="#fff" stroke="#c5c9cf" strokeWidth=".6" /><path d="M8 2.500c2 2 2 6-1 8H4.500C4 9 5 7 8 2.500Z" fill="#1c2733" /></svg>
        </AppIcon>
        <Label $ml={7} $ls={-0.1}>SmartLoanAgent</Label>
        <CoreChip />
        <Usage />
        <Slot $w={13} />
        <BlueButton $w={99} $raised>
          <Slot $w={32}><SparkIcon /></Slot>
          <Label $s={15.1}>Upgrade</Label>
        </BlueButton>
      </SideTop>
      <ThreadBar>
        <Slot $w={22} $c="#42464d"><History size={21} strokeWidth={1.5} /></Slot>
        <Label $ml={47} $c="#2c3036">Add local login functionality and demo u...</Label>
        <AgentPill>
          <Slot $w={16}><AgentIcon /></Slot>
          <Label $s={15} $ml={4} $ls={-0.1}>Agent 3</Label>
        </AgentPill>
        <Slot $w={78} $c="#2c3036"><NewChatIcon /></Slot>
      </ThreadBar>
      <Thread>
        <Para $ls={0.06}>Let me check the client-side authentication code and update it to<br />work with the new local authentication:</Para>
        <ShowMore><ShowIcon /><Label $ls={0.05}>Show 14 more</Label></ShowMore>
        <Step><BrainIcon /><Label $ls={0.03}>Restarted workflow to test application</Label></Step>
        <Para $ls={0.06}>Now let me restart the workflow to test the application:</Para>
        <ShowMore><ShowIcon /><Label $ls={0.05}>Show 14 more</Label></ShowMore>
        <Step><BrainIcon /><Label>Verified successful workflow execution</Label></Step>
        <Para>Great! The application is now running successfully. Let me update<br />the progress tracker and verify the project:</Para>
        <ShowMore><ShowIcon /><Label $ls={0.05}>Show 3 more</Label></ShowMore>
        <Step><Slot $w={18}><Camera size={21} strokeWidth={1.3} /></Slot><Label $ls={-0.1}>Took a screenshot</Label></Step>
        <Para>Does the login page show up correctly with the demo accounts?</Para>
        <Checkpoint>
          <CheckpointMeta>
            <CheckIcon />
            <Label $s={15.1} $ml={9}>Checkpoint made</Label>
            <Label $s={15.1} $ml={5} $ls={-0.05}>4 minutes ago</Label>
          </CheckpointMeta>
          <CheckpointTitle>Add local login functionality and demo user accounts</CheckpointTitle>
          <ChipRow>
            <Chip $w={134} $muted><RollbackIcon /><Label $s={15.1}>Rollback here</Label></Chip>
            <Chip $w={100}><Code size={16} strokeWidth={1.8} /><Label $s={15} $ls={-0.2}>Changes</Label></Chip>
            <Chip $w={95}><PreviewIcon /><Label $s={15} $ls={-0.1}>Preview</Label></Chip>
          </ChipRow>
        </Checkpoint>
        <WorkSummary>
          <GaugeIcon />
          <Label $s={15.1} $ml={10}>6 minutes of work</Label>
          <Spacer />
          <ChevronDown size={18} strokeWidth={1.5} />
        </WorkSummary>
      </Thread>
      <Composer>
        <Placeholder>Make, test, iterate…</Placeholder>
        <ComposerTools>
          <BuildMode>
            <Box size={20} strokeWidth={1.5} />
            <Label $s={15.3} $ml={5}>Build</Label>
            <Slot $w={43}><ChevronUp size={14} strokeWidth={1.8} /></Slot>
          </BuildMode>
          <Slot $w={41}><SelectIcon /></Slot>
          <Slot $w={28} $c="#5b5f66"><Paperclip size={18} strokeWidth={1.6} /></Slot>
          <Spacer />
          <SlidersIcon />
          <Slot $w={16} />
          <Slot $w={29} $c="#777b82"><ArrowUp size={19} strokeWidth={1.7} /></Slot>
        </ComposerTools>
      </Composer>
    </Side>
  );
}

function LoginPage() {
  return (
    <Page>
      <Brand><BrandMark><Shield size={31} strokeWidth={1.9} /></BrandMark>SmartLoan Agent</Brand>
      <Cards>
        <Card>
          <CardTitle>Sign In</CardTitle>
          <CardHint>Enter your credentials to access the system</CardHint>
          <Field>Email<Input>email@example.com</Input></Field>
          <Field>Password<Input>Enter your password</Input></Field>
          <Submit>Sign In</Submit>
        </Card>
        <Card>
          <CardTitle>Demo Accounts</CardTitle>
          <CardHint>Click to fill credentials for testing</CardHint>
          {ACCOUNTS.map(([role, mail]) => (
            <Account key={role}><strong>{role}</strong><span>{mail}</span></Account>
          ))}
          <Note>These are demo accounts for testing purposes. Each role has<br />different permissions and access levels.</Note>
        </Card>
      </Cards>
      <BackHome>Back to Home</BackHome>
    </Page>
  );
}

function PreviewPanel() {
  return (
    <Main>
      <PaneTabs>
        <PaneTab $w={200} $active>
          <Slot $w={34}><Monitor size={21} strokeWidth={1.7} /></Slot>
          <Label $ml={1}>Preview</Label>
          <Spacer />
          <Slot $w={35} $c="#7b7f86"><X size={14} strokeWidth={1.7} /></Slot>
        </PaneTab>
        <PaneTab $w={206}>
          <Slot $w={44} $c="#6b5a1c">
            <svg width="16" height="16" viewBox="0 0 16 16" fill="none" stroke="currentColor" strokeWidth="1.600"><path d="m1 2 5 5.500L1 13M8 14.500h8" /></svg>
          </Slot>
          <Label $ml={-4} $ls={-0.1}>Console</Label>
          <Spacer />
          <Slot $w={38} $c="#a5a8ad"><X size={14} strokeWidth={1.6} /></Slot>
        </PaneTab>
        <Slot $w={42} $c="#61656c"><Plus size={20} strokeWidth={1.6} /></Slot>
        <Spacer />
        <Slot $w={40}><Search size={20} strokeWidth={1.6} /></Slot>
        <Slot $w={40}><UserPlus size={22} strokeWidth={1.6} /></Slot>
        <Slot $w={3} />
        <BlueButton $w={92}>
          <Slot $w={31}><GlobeIcon /></Slot>
          <Label $s={15}>Publish</Label>
        </BlueButton>
        <Slot $w={43}><PanelIcon /></Slot>
      </PaneTabs>
      <Pane>
        <PaneBar>
          <Slot $w={35}><ArrowLeft size={19} strokeWidth={1.7} /></Slot>
          <Slot $w={35} $c="#7b7f86"><ArrowRight size={19} strokeWidth={1.6} /></Slot>
          <Slot $w={36}><RotateCw size={20} strokeWidth={1.7} /></Slot>
          <Slot $w={1} />
          <Address>
            <Slot $w={18} $c="#6f737a">
              <svg width="16" height="16" viewBox="0 0 24 24" fill="none" stroke="currentColor" strokeWidth="2" strokeLinecap="round" strokeLinejoin="round"><path d="M10 13a5 5 0 0 0 7.540.540l3-3a5 5 0 0 0-7.070-7.070l-1.720 1.710M14 11a5 5 0 0 0-7.540-.540l-3 3a5 5 0 0 0 7.070 7.070l1.710-1.710" /></svg>
            </Slot>
            <Label $s={16.8} $ml={1} $c="#676b73">.replit.dev</Label>
            <Label $s={16.5} $ls={-0.6}>/login</Label>
          </Address>
          <Slot $w={4} />
          <Slot $w={34} $c="#676b73"><Wrench size={19} strokeWidth={1.5} /></Slot>
          <Slot $w={32} $c="#676b73"><MonitorSmartphone size={20} strokeWidth={1.5} /></Slot>
          <Slot $w={34} $c="#676b73"><Palette size={20} strokeWidth={1.4} /></Slot>
          <Label $ml={3} $c="#676b73">Theme</Label>
          <Slot $w={45} $c="#676b73"><ExternalLink size={20} strokeWidth={1.5} /></Slot>
        </PaneBar>
        <Banner>
          <Slot $w={20}><TriangleAlert size={19} strokeWidth={1.6} /></Slot>
          <Label $s={15.1} $ml={8} $ls={0.04}>Open a new tab to test authentication and file uploads.</Label>
          <NewTab><ExternalLink size={15} strokeWidth={1.7} /><Label $s={15} $ls={-0.1}>New tab</Label></NewTab>
          <LearnMore>Learn more</LearnMore>
          <Spacer />
          <Slot $w={38}><X size={17} strokeWidth={1.8} /></Slot>
        </Banner>
        <LoginPage />
      </Pane>
    </Main>
  );
}

function WindowsTaskbar() {
  return (
    <Taskbar>
      <Slot $w={24} />
      <Cloud />
      <Slot $w={9} />
      <Stack $w={479} $align="flex-start" $ls={-0.3}><span>22°C</span><small>Cloudy</small></Stack>
      <Slot $w={15} />
      <StartIcon />
      <SearchPill>
        <Search size={21} strokeWidth={2} color="#262626" />
        <Label $s={16.600} $ml={12} $ls={-0.1}>Search</Label>
      </SearchPill>
      <Apps>
        <AppTile><TaskView /></AppTile>
        <AppTile><Copilot id="c2" s={28} /></AppTile>
        <AppTile $open><Folder /></AppTile>
        <AppTile $open><Npp /></AppTile>
        <AppTile $open><Chrome /></AppTile>
        <AppTile $active><Edge /></AppTile>
        <AppTile><Paint /></AppTile>
        <AppTile><Obs /></AppTile>
        <AppTile><Snip /></AppTile>
      </Apps>
      <Spacer />
      <Slot $w={40}><ChevronUp size={20} strokeWidth={2.300} /></Slot>
      <Slot $w={40}><Sync /></Slot>
      <Stack $w={56} $align="center" $s={14.400} $ls={-0.2}><span>ENG</span><span>IN</span></Stack>
      <Slot $w={4} />
      <Slot $w={30}><Wifi /></Slot>
      <Slot $w={29}><Volume /></Slot>
      <Slot $w={31}><Battery /></Slot>
      <Stack $w={93} $align="flex-end" $s={14.700}><span>00:46</span><span>29-10-2025</span></Stack>
      <Slot $w={24} />
    </Taskbar>
  );
}

export default function App() {
  return (
    <Screen>
      <Global />
      <BrowserChrome />
      <Workspace>
        <ChatPanel />
        <PreviewPanel />
      </Workspace>
      <WindowsTaskbar />
      <Watermark>
        <WatermarkLine $big>Activate Windows</WatermarkLine>
        <WatermarkLine>Go to Settings to activate Windows.</WatermarkLine>
      </Watermark>
    </Screen>
  );
}
